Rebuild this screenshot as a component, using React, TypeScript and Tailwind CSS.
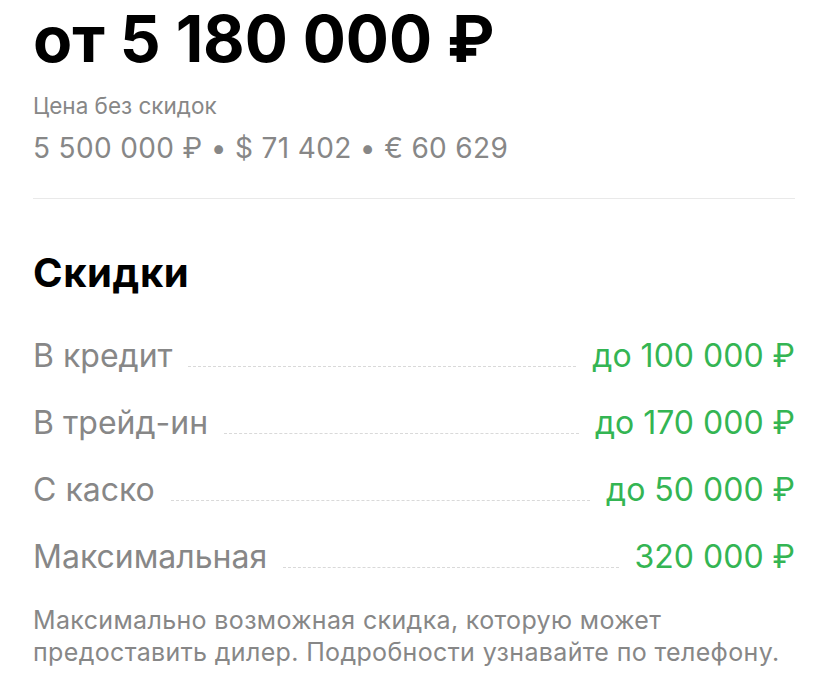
import React from "react";

const rows = [
  { label: "В кредит", value: "до 100 000 ₽" },
  { label: "В трейд-ин", value: "до 170 000 ₽" },
  { label: "С каско", value: "до 50 000 ₽" },
  { label: "Максимальная", value: "320 000 ₽" },
];

export default function App() {
  return (
    <div
      className="w-[828px] h-[697px] bg-white px-[33px] overflow-hidden"
      style={{ fontFamily: "Inter, 'Noto Sans', sans-serif" }}
    >
      <div className="pt-[7px] text-[64px] leading-[64px] font-bold text-black tracking-[-0.1px]">
        от 5 180 000 ₽
      </div>
      <div className="mt-[19px] text-[22.5px] leading-[32px] text-[#878787]">
        Цена без скидок
      </div>
      <div className="mt-[8px] text-[28px] leading-[36px] text-[#878787] tracking-[0.35px]">
        5 500 000 ₽ • $ 71 402 • € 60 629
      </div>
      <div className="mt-[32px] h-px bg-[#e9e9e9]" />
      <div className="mt-[50px] text-[40px] leading-[48px] font-bold text-black tracking-[0.6px]">
        Скидки
      </div>
      <div className="mt-[39px] flex flex-col gap-[27px]">
        {rows.map((r) => (
          <div key={r.label} className="flex items-baseline text-[32px] leading-[40px]">
            <span className="text-[#878787]">{r.label}</span>
            <div className="flex-1 mx-4 h-0 border-b border-dashed border-[#d9d9d9]" />
            <span className="text-[#34b553]">{r.value}</span>
          </div>
        ))}
      </div>
      <div className="mt-[27px] text-[25px] leading-[32px] text-[#878787] tracking-[0.35px]">
        Максимально возможная скидка, которую может
        <br />
        предоставить дилер. Подробности узнавайте по телефону.
      </div>
    </div>
  );
}
